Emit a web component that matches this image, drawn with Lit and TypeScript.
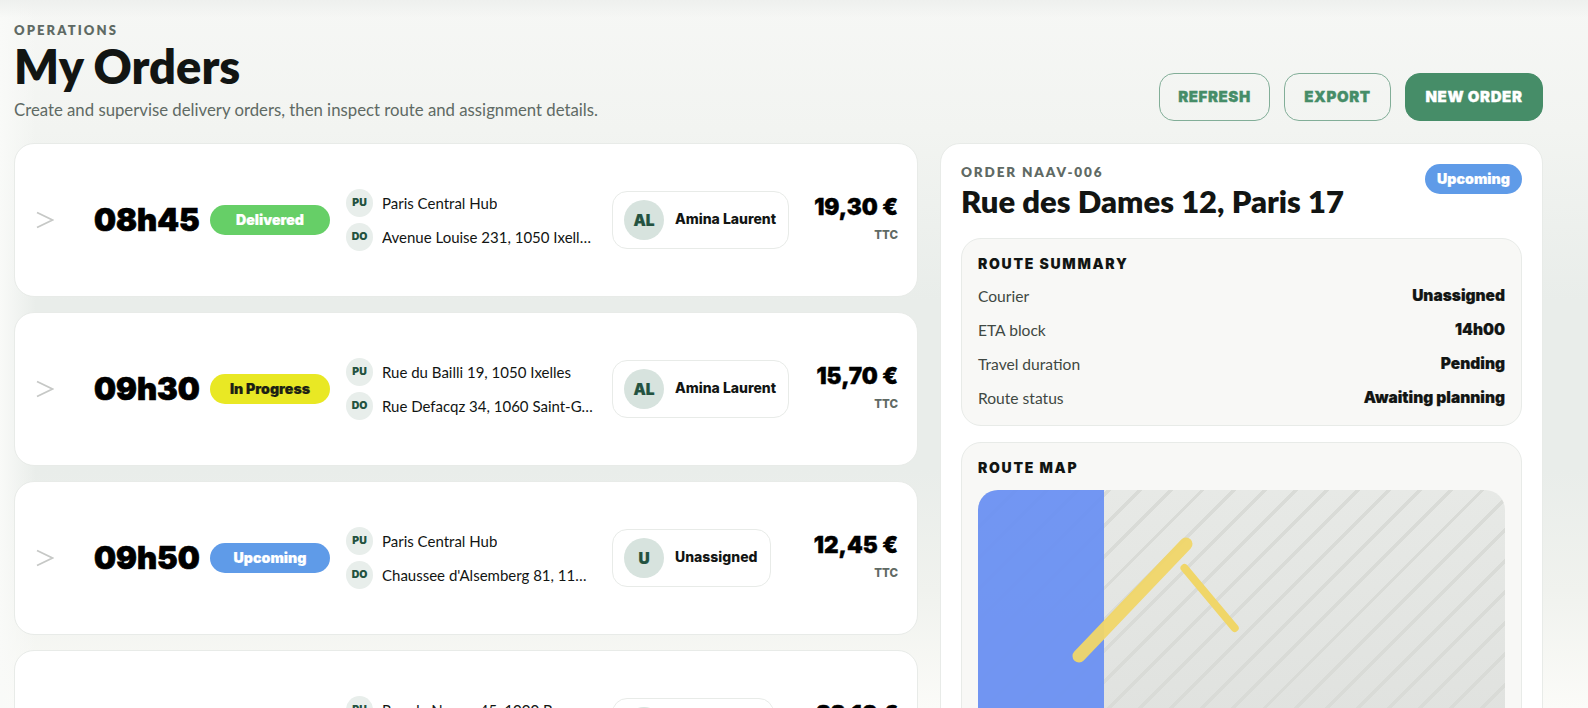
import { LitElement, html, css } from "lit";
import { customElement } from "lit/decorators.js";

type Order = {
  time: string;
  status: string;
  tone: string;
  pickup: string;
  dropoff: string;
  initials: string;
  courier: string;
  price: string;
};

const ORDERS: Order[] = [
  { time: "08h45", status: "Delivered", tone: "delivered", pickup: "Paris Central Hub", dropoff: "Avenue Louise 231, 1050 Ixelles", initials: "AL", courier: "Amina Laurent", price: "19,30 €" },
  { time: "09h30", status: "In Progress", tone: "progress", pickup: "Rue du Bailli 19, 1050 Ixelles", dropoff: "Rue Defacqz 34, 1060 Saint-Gilles", initials: "AL", courier: "Amina Laurent", price: "15,70 €" },
  { time: "09h50", status: "Upcoming", tone: "upcoming", pickup: "Paris Central Hub", dropoff: "Chaussee d'Alsemberg 81, 1190 Forest", initials: "U", courier: "Unassigned", price: "12,45 €" },
  { time: "10h15", status: "Upcoming", tone: "upcoming", pickup: "Rue de Namur 45, 1000 Bruxelles", dropoff: "Place Flagey 7, 1050 Ixelles", initials: "NM", courier: "Noah Martin", price: "22,10 €" },
];

const SUMMARY = [
  ["Courier", "Unassigned"],
  ["ETA block", "14h00"],
  ["Travel duration", "Pending"],
  ["Route status", "Awaiting planning"],
];

@customElement("app-root")
export class AppRoot extends LitElement {
  static styles = css`
    :host {
      display: block;
      height: 708px;
      overflow: hidden;
      font-family: "Lato", "Noto Sans", sans-serif;
      color: #121513;
      background:
        linear-gradient(180deg, #eef0ee 0, rgba(238, 240, 238, 0) 18px),
        linear-gradient(90deg, #f9faf8 0, rgba(249, 250, 248, 0) 36px),
        linear-gradient(180deg, #f6f7f5 0, #f2f4f1 130px, #e9edea 300px, #e9edea 470px, #f0f2ee 590px, #fbfbf8 708px);
    }
    .page {
      display: flex;
      flex-direction: column;
      padding: 21px 45px 0 14px;
    }
    .head {
      display: flex;
      justify-content: space-between;
      align-items: flex-end;
      height: 100px;
      margin-bottom: 22px;
    }
    .eyebrow {
      font-size: 13px;
      font-weight: 800;
      letter-spacing: 2.1px;
      color: #5f6a64;
      line-height: 16px;
    }
    h1 {
      margin: 2px 0 0;
      font-size: 47px;
      font-weight: 800;
      line-height: 52px;
    }
    .sub {
      margin: 7px 0 0;
      font-size: 16.75px;
      line-height: 22px;
      color: #5f6a64;
    }
    .actions {
      display: flex;
      gap: 14px;
    }
    button {
      height: 48px;
      width: 111px;
      padding: 0 0 2px;
      border-radius: 15px;
      border: 1px solid #82ae98;
      background: transparent;
      color: #468d68;
      font: 900 15px "Inter", sans-serif;
      letter-spacing: 0.6px;
      -webkit-text-stroke: 0.3px currentColor;
    }
    button.export {
      width: 107px;
    }
    button.primary {
      width: 138px;
      background: #468d68;
      border-color: #468d68;
      color: #fff;
    }
    .main {
      display: grid;
      grid-template-columns: 904px 603px;
      gap: 22px;
      align-items: start;
    }
    .list {
      display: flex;
      flex-direction: column;
      gap: 15px;
    }
    .card {
      box-sizing: border-box;
      height: 154px;
      display: flex;
      align-items: center;
      padding: 0 19px 0 21px;
      background: rgba(255, 255, 255, 0.97);
      border: 1px solid #e8ebe8;
      border-radius: 20px;
    }
    .chev {
      width: 18px;
      height: 18px;
      flex: none;
      margin-right: 40px;
    }
    .time {
      width: 116px;
      flex: none;
      padding-bottom: 2px;
      font-family: "Inter", sans-serif;
      font-size: 31px;
      font-weight: 900;
      color: #000;
      -webkit-text-stroke: 0.7px #000;
    }
    .pill {
      display: inline-flex;
      align-items: center;
      justify-content: center;
      box-sizing: border-box;
      height: 30px;
      padding-bottom: 2px;
      border-radius: 15px;
      color: #fff;
      font-family: "Inter", sans-serif;
      font-size: 14.2px;
      font-weight: 900;
      -webkit-text-stroke: 0.2px currentColor;
    }
    .card .pill {
      width: 120px;
      flex: none;
      margin-right: 16px;
    }
    .delivered { background: #66cf67; }
    .progress { background: #e9e824; color: #1c1f14; }
    .upcoming { background: #5f9be8; }
    .stops {
      width: 247px;
      flex: none;
      display: flex;
      flex-direction: column;
      gap: 6px;
      margin-right: 19px;
      padding-bottom: 1px;
    }
    .stop {
      display: flex;
      align-items: center;
      gap: 9px;
      font-size: 15px;
      line-height: 28px;
    }
    .tag {
      width: 27px;
      height: 28px;
      flex: none;
      border-radius: 50%;
      background: #e8eeeb;
      color: #235240;
      display: flex;
      align-items: center;
      justify-content: center;
      font-family: "Inter", sans-serif;
      font-size: 10.5px;
      font-weight: 900;
    }
    .addr {
      overflow: hidden;
      white-space: nowrap;
      text-overflow: ellipsis;
    }
    .courier {
      box-sizing: border-box;
      height: 58px;
      display: flex;
      align-items: center;
      gap: 11px;
      padding: 0 12px 0 11px;
      background: #fff;
      border: 1px solid #e8ebe8;
      border-radius: 15px;
      font-family: "Inter", sans-serif;
      font-size: 14px;
      font-weight: 800;
    }
    .name {
      padding-bottom: 3px;
    }
    .avatar {
      width: 40px;
      height: 40px;
      border-radius: 50%;
      background: #d7e3de;
      color: #235240;
      display: flex;
      align-items: center;
      justify-content: center;
      font-size: 15.5px;
      font-weight: 900;
      -webkit-text-stroke: 0.2px currentColor;
    }
    .price {
      margin-left: auto;
      padding-bottom: 5px;
      text-align: right;
      font-family: "Inter", sans-serif;
      font-size: 22.5px;
      font-weight: 900;
      line-height: 27px;
      color: #000;
      -webkit-text-stroke: 0.4px #000;
    }
    .ttc {
      margin-top: 8px;
      font-size: 11.5px;
      line-height: 14px;
      font-weight: 800;
      color: #5f6a64;
      -webkit-text-stroke: 0;
    }
    .panel {
      box-sizing: border-box;
      height: 640px;
      padding: 20px 20px 0;
      background: #fff;
      border: 1px solid #e8ebe8;
      border-radius: 20px;
      display: flex;
      flex-direction: column;
      gap: 16px;
    }
    .panel-head {
      display: flex;
      justify-content: space-between;
      align-items: flex-start;
      height: 58px;
      flex: none;
    }
    .panel-head .pill {
      width: 97px;
    }
    .panel-head .eyebrow {
      font-size: 13.5px;
      letter-spacing: 1.85px;
    }
    h2 {
      margin: 2px 0 0;
      font-size: 31px;
      font-weight: 800;
      line-height: 38px;
    }
    .box {
      flex: none;
      padding: 16px 16px 10px;
      background: #f8f8f6;
      border: 1px solid #e8ebe8;
      border-radius: 20px;
    }
    h3 {
      margin: 0;
      font-family: "Inter", sans-serif;
      font-size: 14px;
      font-weight: 900;
      letter-spacing: 1.7px;
      line-height: 18px;
    }
    .rows {
      margin-top: 6px;
      display: flex;
      flex-direction: column;
    }
    .row {
      display: flex;
      justify-content: space-between;
      font-size: 15.6px;
      line-height: 34px;
      color: #3f4843;
    }
    .row b {
      font-family: "Inter", sans-serif;
      font-size: 15.5px;
      font-weight: 900;
      color: #121513;
      -webkit-text-stroke: 0.2px currentColor;
    }
    .map {
      position: relative;
      margin-top: 13px;
      height: 260px;
      border-radius: 20px;
      overflow: hidden;
      background:
        repeating-linear-gradient(135deg, transparent 0 3px, #d9dbd7 3px 6.5px, transparent 6.5px 22px),
        linear-gradient(180deg, #e7e9e6, #dfe1de);
    }
    .water {
      position: absolute;
      inset: 0 auto 0 0;
      width: 126px;
      background: rgba(104, 143, 243, 0.93);
    }
    .map svg {
      position: absolute;
      inset: 0;
      width: 100%;
      height: 100%;
    }
  `;

  private chevron() {
    return html`<svg class="chev" viewBox="0 0 18 18" fill="none" stroke="#c6c8c6" stroke-width="1.8">
      <path d="M1 1.5 16.5 9 1 16.5" />
    </svg>`;
  }

  private renderCard(o: Order) {
    return html`<div class="card">
      ${this.chevron()}
      <div class="time">${o.time}</div>
      <div class="pill ${o.tone}">${o.status}</div>
      <div class="stops">
        <div class="stop"><span class="tag">PU</span><span class="addr">${o.pickup}</span></div>
        <div class="stop"><span class="tag">DO</span><span class="addr">${o.dropoff}</span></div>
      </div>
      <div class="courier"><span class="avatar">${o.initials}</span><span class="name">${o.courier}</span></div>
      <div class="price">${o.price}<div class="ttc">TTC</div></div>
    </div>`;
  }

  render() {
    return html`<div class="page">
      <div class="head">
        <div>
          <div class="eyebrow">OPERATIONS</div>
          <h1>My Orders</h1>
          <p class="sub">Create and supervise delivery orders, then inspect route and assignment details.</p>
        </div>
        <div class="actions">
          <button>REFRESH</button>
          <button class="export">EXPORT</button>
          <button class="primary">NEW ORDER</button>
        </div>
      </div>
      <div class="main">
        <div class="list">${ORDERS.map((o) => this.renderCard(o))}</div>
        <aside class="panel">
          <div class="panel-head">
            <div>
              <div class="eyebrow">ORDER NAAV-006</div>
              <h2>Rue des Dames 12, Paris 17</h2>
            </div>
            <div class="pill upcoming">Upcoming</div>
          </div>
          <section class="box">
            <h3>ROUTE SUMMARY</h3>
            <div class="rows">
              ${SUMMARY.map(([k, v]) => html`<div class="row"><span>${k}</span><b>${v}</b></div>`)}
            </div>
          </section>
          <section class="box">
            <h3>ROUTE MAP</h3>
            <div class="map">
              <div class="water"></div>
              <svg viewBox="0 0 527 260" fill="none" stroke-linecap="round">
                <path d="M101 166 208 54" stroke="#f0d668" stroke-opacity="0.95" stroke-width="13" />
                <path d="M206.5 78 256.7 138" stroke="#f0d668" stroke-width="8" />
              </svg>
            </div>
          </section>
        </aside>
      </div>
    </div>`;
  }
}
